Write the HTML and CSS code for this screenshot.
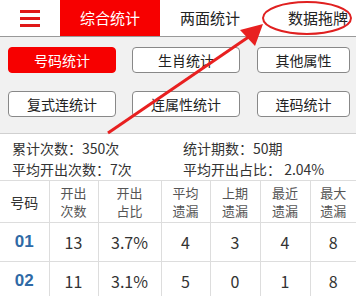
FILE: index.html
```html
<!DOCTYPE html>
<html lang="zh">
<head>
<meta charset="utf-8">
<link rel="stylesheet" href="styles.css">
</head>
<body>
<div class="page">
  <header class="topbar">
    <div class="menu"><span></span><span></span><span></span></div>
    <div class="tab active">综合统计</div>
    <div class="tab">两面统计</div>
    <div class="tab last">数据拖牌</div>
  </header>
  <section class="buttons">
    <div class="btn on">号码统计</div>
    <div class="btn">生肖统计</div>
    <div class="btn">其他属性</div>
    <div class="btn">复式连统计</div>
    <div class="btn">连属性统计</div>
    <div class="btn">连码统计</div>
  </section>
  <section class="stats">
    <div>累计次数：350次</div>
    <div>统计期数：50期</div>
    <div>平均开出次数：7次</div>
    <div>平均开出占比： 2.04%</div>
  </section>
  <table class="grid">
    <colgroup>
      <col style="width:49px"><col style="width:49px"><col style="width:63px"><col style="width:49px"><col style="width:50px"><col style="width:50px"><col style="width:46px">
    </colgroup>
    <thead>
      <tr><th class="first">号码</th><th>开出<br>次数</th><th>开出<br>占比</th><th>平均<br>遗漏</th><th>上期<br>遗漏</th><th>最近<br>遗漏</th><th>最大<br>遗漏</th></tr>
    </thead>
    <tbody>
      <tr><td class="num">01</td><td>13</td><td>3.7%</td><td>4</td><td>3</td><td>4</td><td>8</td></tr>
      <tr><td class="num">02</td><td>11</td><td>3.1%</td><td>5</td><td>0</td><td>1</td><td>8</td></tr>
    </tbody>
  </table>
  <svg class="annot" width="356" height="296" viewBox="0 0 356 296">
    <ellipse cx="307" cy="18" rx="44" ry="16" fill="none" stroke="#e02020" stroke-width="2"/>
    <line x1="108" y1="133" x2="250" y2="36" stroke="#e82020" stroke-width="3"/>
    <polygon points="263,24 240,30 255,46" fill="#e82020"/>
  </svg>
</div>
</body>
</html>
```
FILE: styles.css
```css
* { box-sizing: border-box; }
html, body { margin: 0; padding: 0; }
body {
  font-family: "Noto Sans CJK SC", "Liberation Sans", sans-serif;
  color: #333;
  background: #fff;
}
.page { position: relative; width: 356px; height: 296px; overflow: hidden; }
.topbar {
  display: flex;
  height: 37px;
  border-bottom: 1px solid #999;
  background: #fff;
}
.menu {
  width: 60px;
  display: flex;
  flex-direction: column;
  justify-content: center;
  gap: 4px;
  padding-left: 20px;
}
.menu span { display: block; width: 20px; height: 3px; background: #e01818; }
.tab {
  font-size: 15px;
  line-height: 36px;
  color: #222;
  text-align: center;
}
.tab.active { width: 100px; background: #f70000; color: #fff; }
.tab:nth-child(3) { width: 98px; padding-left: 2px; }
.tab.last { width: 98px; padding-left: 22px; }
.buttons {
  background: #f1f1f1;
  display: grid;
  grid-template-columns: 108px 108px 94px;
  column-gap: 16px;
  row-gap: 18px;
  padding: 10px 0 16px 8px;
  border-bottom: 1px solid #d0d0d0;
}
.buttons .btn:nth-child(3n) { margin-left: 1px; }
.btn {
  height: 26px;
  line-height: 24px;
  text-align: center;
  font-size: 14px;
  color: #222;
  background: #fff;
  border: 1px solid #888;
  border-radius: 4px;
}
.btn.on { background: #f70000; border-color: #f70000; color: #fff; }
.stats {
  display: grid;
  grid-template-columns: 171px 1fr;
  padding: 4px 0 0 12px;
  height: 46px;
  font-size: 14px;
  line-height: 21px;
  color: #333;
}
.grid {
  width: 356px;
  border-collapse: collapse;
  table-layout: fixed;
}
.grid th, .grid td {
  border: 1px solid #ddd;
  text-align: center;
  padding: 0;
}
.grid tr > :first-child { border-left: none; }
.grid tr > :last-child { border-right: none; }
.grid th {
  height: 42px;
  font-size: 13px;
  font-weight: normal;
  line-height: 18px;
  color: #555;
}
.grid th.first { font-size: 14px; color: #333; }
.grid td {
  height: 39px;
  font-size: 16px;
  color: #333;
}
.grid td.num { color: #2f6aa6; font-weight: bold; font-family: "Liberation Sans", sans-serif; font-size: 17px; }
.annot { position: absolute; left: 0; top: 0; pointer-events: none; }
```
